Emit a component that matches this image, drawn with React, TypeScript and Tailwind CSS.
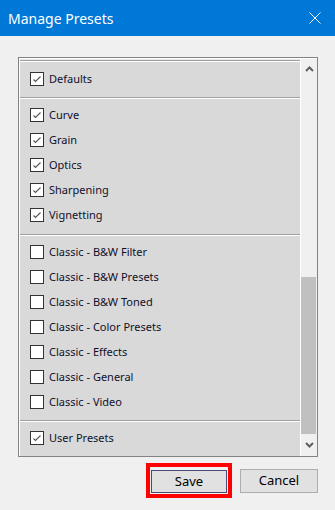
import { Fragment } from 'react';

const sections: { items: string[]; checked: boolean; pt: string; pb: string }[] = [
  { items: ['Defaults'], checked: true, pt: 'pt-[4px]', pb: 'pb-[6px]' },
  { items: ['Curve', 'Grain', 'Optics', 'Sharpening', 'Vignetting'], checked: true, pt: 'pt-[3px]', pb: 'pb-[7px]' },
  {
    items: [
      'Classic - B&W Filter',
      'Classic - B&W Presets',
      'Classic - B&W Toned',
      'Classic - Color Presets',
      'Classic - Effects',
      'Classic - General',
      'Classic - Video',
    ],
    checked: false,
    pt: 'pt-[3px]',
    pb: 'pb-[6px]',
  },
  { items: ['User Presets'], checked: true, pt: 'pt-[3px]', pb: 'pb-[6px]' },
];

function Checkbox({ checked }: { checked: boolean }) {
  return (
    <div className="w-[14px] h-[14px] border border-[#333333] bg-white shrink-0 flex items-center justify-center">
      {checked && (
        <svg width="12" height="12" viewBox="0 0 12 12">
          <polyline points="2.5,6.5 4.5,8.5 9.5,3.5" fill="none" stroke="#555555" strokeWidth="1.1" />
        </svg>
      )}
    </div>
  );
}

function Separator() {
  return (
    <>
      <div className="h-px bg-[#a0a0a0]" />
      <div className="h-px bg-white" />
    </>
  );
}

export default function App() {
  return (
    <div
      className="w-[335px] h-[510px] bg-[#f0f0f0] flex flex-col"
      style={{ fontFamily: '"Noto Sans", "Liberation Sans", sans-serif' }}
    >
      <div className="h-[36px] bg-[#0078d7] flex items-center justify-between pl-[8px] pr-[14px] shrink-0">
        <span className="text-white text-[14px]">Manage Presets</span>
        <svg width="12" height="12" viewBox="0 0 12 12">
          <path d="M0.5 0.5 L11.5 11.5 M11.5 0.5 L0.5 11.5" stroke="white" strokeWidth="1" />
        </svg>
      </div>

      <div className="pt-[21px] pl-[18px] flex flex-col">
        <div className="w-[300px] h-[400px] border border-[#828282] flex overflow-hidden">
          <div className="flex-1 border-t border-l border-white bg-[#d9d9d9] overflow-hidden">
            <div className="h-px bg-[#e8e8e8]" />
            <Separator />
            {sections.map((s, i) => (
              <Fragment key={i}>
                {i > 0 && <Separator />}
                <div className={`${s.pt} ${s.pb}`}>
                  {s.items.map((label) => (
                    <div key={label} className="h-[25px] flex items-center pl-[10px] gap-[5px]">
                      <Checkbox checked={s.checked} />
                      <span className="text-[11px] text-[#10102a] leading-none">{label}</span>
                    </div>
                  ))}
                </div>
              </Fragment>
            ))}
          </div>
          <div className="w-[17px] border-l border-white border-t bg-[#f0f0f0] flex flex-col shrink-0">
            <div className="h-[20px] flex items-center justify-center">
              <svg width="9" height="6" viewBox="0 0 9 6">
                <polyline points="1,5 4.5,1.5 8,5" fill="none" stroke="#606060" strokeWidth="2" />
              </svg>
            </div>
            <div className="h-[198px]" />
            <div className="h-[157px] mr-px bg-[#c0c0c0]" />
            <div className="flex-1 flex items-center justify-center">
              <svg width="9" height="6" viewBox="0 0 9 6">
                <polyline points="1,1 4.5,4.5 8,1" fill="none" stroke="#606060" strokeWidth="2" />
              </svg>
            </div>
          </div>
        </div>

        <div className="flex items-center justify-end w-[300px] mt-[6px] gap-[8px]">
          <div className="border-4 border-[#ff0000] p-px">
            <button className="w-[76px] h-[23px] bg-[#e1e1e1] border border-[#4a4a78] text-[13px] text-black">
              Save
            </button>
          </div>
          <button className="w-[78px] h-[24px] bg-[#e1e1e1] border border-[#adadad] text-[13px] text-black">
            Cancel
          </button>
        </div>
      </div>
    </div>
  );
}
